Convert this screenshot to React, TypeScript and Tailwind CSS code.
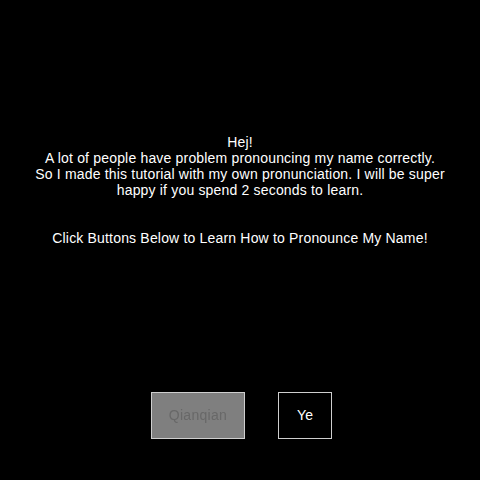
import * as React from 'react'

// ── Name pronunciation page ───────────────────────────────────────────────────
const syllables = ['Qianqian', 'Ye']

export default function App() {
  const [active, setActive] = React.useState<string | null>('Qianqian')

  return (
    <div className="w-[480px] h-[480px] bg-black text-white flex flex-col items-center font-['Liberation_Sans',Arial,sans-serif]">
      <p className="mt-[134px] text-center text-[14px] leading-[16px] tracking-[0.18px] px-2">
        Hej!
        <br />
        A lot of people have problem pronouncing my name correctly.
        <br />
        So I made this tutorial with my own pronunciation. I will be super
        <br />
        happy if you spend 2 seconds to learn.
        <br />
        <br />
        <br />
        Click Buttons Below to Learn How to Pronounce My Name!
      </p>

      <div className="mt-[146px] flex gap-[33px] pl-[3px]">
        {syllables.map(s => (
          <button
            key={s}
            type="button"
            onClick={() => setActive(s)}
            className={
              s === active
                ? 'h-[47px] w-[94px] border border-[#cfcfcf] bg-[#7f7f7f] text-[#686868] text-[14px] tracking-[0.3px] blur-[0.5px]'
                : 'h-[47px] w-[54px] border border-[#cfcfcf] bg-black text-white text-[14px] tracking-[0.2px]'
            }
          >
            {s}
          </button>
        ))}
      </div>
    </div>
  )
}
